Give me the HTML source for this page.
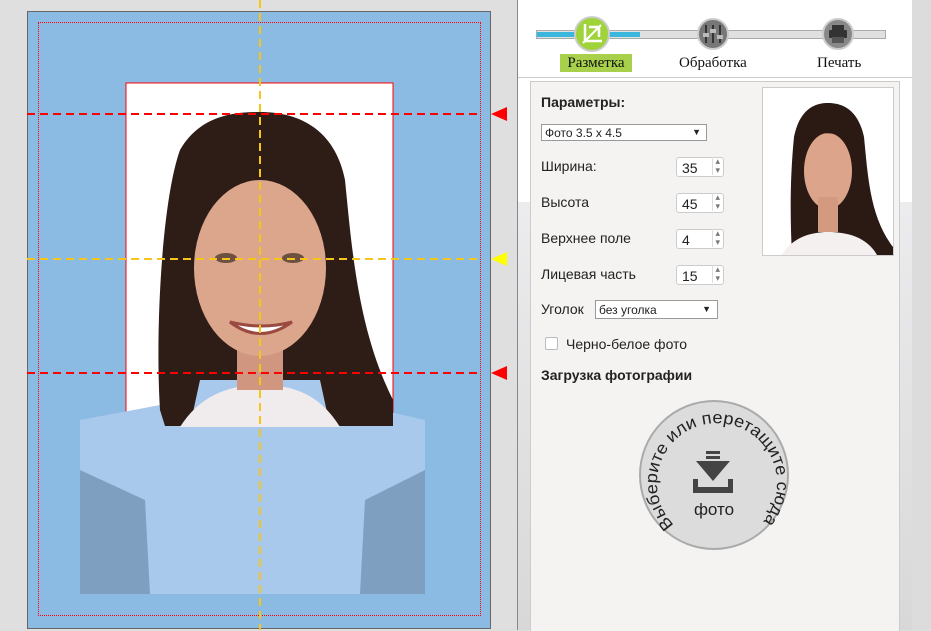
<!DOCTYPE html>
<html><head><meta charset="utf-8"><style>
body{margin:0;width:931px;height:630px;overflow:hidden;background:#dfdfdf;font-family:"Liberation Sans",sans-serif;position:relative}
.a{position:absolute}
.lbl{position:absolute;left:541px;font-size:14px;color:#222}
.num{position:absolute;left:676px;width:48px;height:20px;border:1px solid #ccc;border-radius:3px;background:#fff;font-size:14px;box-sizing:border-box;padding:2px 0 0 5px;color:#222}
.num:after{content:"▴\A▾";white-space:pre;position:absolute;right:3px;top:-1px;font-size:9px;line-height:9px;color:#777;border-left:1px solid #ddd;padding-left:2px}
.serif{font-family:"Liberation Serif",serif;font-size:15px;color:#111}
</style></head><body>
<div class="a" style="left:518px;top:0;width:413px;height:630px;background:linear-gradient(#fff 0,#fff 202px,#ececee 202px,#d8d8d8 630px)"></div>
<div class="a" style="left:912px;top:0;width:19px;height:630px;background:#dcdcdc"></div>
<div class="a" style="left:517px;top:0;width:1px;height:630px;background:#888"></div>
<div class="a" style="left:518px;top:77px;width:394px;height:1px;background:#ccc"></div>
<div class="a" style="left:536px;top:30px;width:350px;height:9px;background:#e0e0e0;border:1px solid #aaa;box-sizing:border-box"></div>
<div class="a" style="left:537px;top:32px;width:103px;height:5px;background:#3bb6dc"></div>
<svg class="a" style="left:570px;top:12px" width="44" height="44"><circle cx="22" cy="22" r="17" fill="#9fd33a" stroke="#ccc" stroke-width="2"/><g stroke="#fff" stroke-width="2.5" fill="none"><path d="M15 12v17h17M19 15h10v10"/><path d="M13 31L31 13" stroke-width="2"/></g></svg>
<svg class="a" style="left:696px;top:17px" width="34" height="34"><circle cx="17" cy="17" r="15" fill="#777" stroke="#ccc" stroke-width="2"/><g fill="#333"><rect x="9" y="8" width="2" height="18"/><rect x="16" y="8" width="2" height="18"/><rect x="23" y="8" width="2" height="18"/></g><g fill="#bbb"><rect x="7" y="16" width="6" height="4"/><rect x="14" y="12" width="6" height="4"/><rect x="21" y="18" width="6" height="4"/></g></svg>
<svg class="a" style="left:821px;top:17px" width="34" height="34"><circle cx="17" cy="17" r="15" fill="#888" stroke="#ccc" stroke-width="2"/><rect x="11" y="8" width="12" height="5" fill="#333"/><rect x="8" y="13" width="18" height="8" rx="1" fill="#333"/><rect x="11" y="20" width="12" height="6" fill="#555"/></svg>
<div class="a serif" style="left:560px;top:54px;width:72px;height:18px;background:#a8d04a;text-align:center;line-height:18px">Разметка</div>
<div class="a serif" style="left:679px;top:55px">Обработка</div>
<div class="a serif" style="left:817px;top:55px">Печать</div>
<div class="a" style="left:530px;top:81px;width:368px;height:549px;background:#f4f3f1;border-left:1px solid #ccc;border-right:1px solid #ccc;border-top:1px solid #ccc"></div>
<div class="a" style="left:541px;top:94px;font-size:14px;font-weight:bold;color:#222">Параметры:</div>
<div class="a" style="left:541px;top:124px;width:166px;height:17px;border:1px solid #999;background:#fff;font-size:12px;box-sizing:border-box;padding:1px 3px;color:#222">Фото 3.5 x 4.5<span style="position:absolute;right:5px;font-size:9px;top:2px">▼</span></div>
<div class="lbl" style="top:158px">Ширина:</div><div class="num" style="top:157px">35</div>
<div class="lbl" style="top:194px">Высота</div><div class="num" style="top:193px">45</div>
<div class="lbl" style="top:230px">Верхнее поле</div><div class="num" style="top:229px">4</div>
<div class="lbl" style="top:266px">Лицевая часть</div><div class="num" style="top:265px">15</div>
<div class="lbl" style="top:301px">Уголок</div>
<div class="a" style="left:595px;top:300px;width:123px;height:19px;border:1px solid #999;background:#fff;font-size:12px;box-sizing:border-box;padding:2px 3px;color:#222">без уголка<span style="position:absolute;right:6px;font-size:9px;top:3px">▼</span></div>
<div class="a" style="left:545px;top:337px;width:11px;height:11px;border:1px solid #bbb;border-radius:2px;background:#fff"></div>
<div class="lbl" style="left:566px;top:336px">Черно-белое фото</div>
<div class="a" style="left:541px;top:367px;font-size:14px;font-weight:bold;color:#222">Загрузка фотографии</div>
<svg class="a" style="left:638px;top:399px" width="152" height="152"><defs><path id="c" d="M36 126A60 60 0 1 1 122 126"/></defs><circle cx="76" cy="76" r="74" fill="#dcdcdc" stroke="#aaa" stroke-width="2"/><text font-size="17" fill="#222" font-family="Liberation Sans,sans-serif"><textPath href="#c" textLength="276" lengthAdjust="spacingAndGlyphs">Выберите или перетащите сюда</textPath></text><rect x="68" y="52" width="14" height="3" fill="#444"/><rect x="68" y="57" width="14" height="3" fill="#444"/><path d="M58 62h34L75 82z" fill="#444"/><path d="M55 80v14h40V80h-5v8H60v-8z" fill="#444"/><text x="76" y="116" text-anchor="middle" font-size="17" fill="#222" font-family="Liberation Sans,sans-serif">фото</text></svg>
<svg class="a" style="left:762px;top:87px" width="132" height="169"><rect x=".5" y=".5" width="131" height="168" fill="#fff" stroke="#ccc"/><path d="M30 168C28 130 28 90 32 50 38 20 55 16 66 16 80 16 96 22 102 50 106 90 108 130 131 160L131 168z" fill="#2b1a14"/><path d="M20 168C30 150 50 145 66 145 85 145 105 150 115 168z" fill="#f4f0f0"/><ellipse cx="66" cy="84" rx="24" ry="38" fill="#dca48a"/><rect x="56" y="110" width="20" height="35" fill="#d49a80"/><path d="M44 50C52 36 82 36 90 55 80 45 58 44 44 50z" fill="#2b1a14"/></svg>
<div class="a" style="left:27px;top:11px;width:464px;height:618px;background:#8bbae3;border:1px solid #666;box-sizing:border-box"></div>
<div class="a" style="left:38px;top:22px;width:443px;height:594px;border:1px dotted red;box-sizing:border-box"></div>
<svg class="a" style="left:0;top:0" width="517" height="630">
<rect x="126" y="83" width="267" height="344" fill="#fff" stroke="red"/>
<path d="M80 420L80 594 425 594 425 420 360 405 320 380 200 380 160 405z" fill="#a8c9ec"/>
<path d="M80 470L80 594 150 594 145 500z M425 470L425 594 360 594 365 500z" fill="#7f9fc0"/>
<path d="M160 410C155 330 162 200 180 150 200 115 235 112 260 112 300 112 335 130 345 180 352 250 358 330 393 400L393 426 330 426 320 380 200 380 190 426 165 426z" fill="#2e1c16"/>
<path d="M180 427C200 395 230 385 260 385 295 385 320 395 340 427z" fill="#f0ecee"/>
<rect x="237" y="320" width="46" height="70" fill="#d09680"/>
<ellipse cx="260" cy="268" rx="66" ry="88" fill="#dba68c"/>
<path d="M190 240C200 185 230 160 262 160 300 160 330 190 335 250 320 200 290 175 255 180 220 185 200 210 190 240z" fill="#2e1c16"/>
<ellipse cx="226" cy="258" rx="11" ry="5" fill="#6d5040"/><ellipse cx="293" cy="258" rx="11" ry="5" fill="#6d5040"/>
<path d="M230 322Q260 345 292 322Q262 330 230 322z" fill="#fff" stroke="#9a4a40" stroke-width="3"/>
<line x1="260" y1="0" x2="260" y2="630" stroke="#f5c518" stroke-width="2" stroke-dasharray="8 5"/>
<line x1="27" y1="114" x2="480" y2="114" stroke="red" stroke-width="2" stroke-dasharray="8 5"/>
<line x1="27" y1="259" x2="480" y2="259" stroke="#f5c518" stroke-width="2" stroke-dasharray="8 5"/>
<line x1="27" y1="373" x2="480" y2="373" stroke="red" stroke-width="2" stroke-dasharray="8 5"/>
<path d="M491 114L507 107 507 121z" fill="red"/><path d="M491 259L507 252 507 266z" fill="#ff0"/><path d="M491 373L507 366 507 380z" fill="red"/>
</svg>
</body></html>
